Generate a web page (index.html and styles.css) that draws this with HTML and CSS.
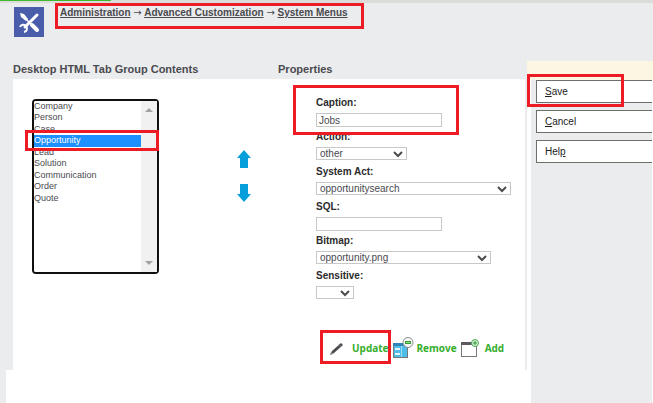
FILE: index.html
```html
<!DOCTYPE html>
<html lang="en">
<head>
  <meta charset="UTF-8">
  <meta name="viewport" content="width=device-width, initial-scale=1.0">
  <title>System Menus</title>
  <link rel="stylesheet" href="styles.css">
</head>
<body>

  <div class="progress"><div class="progress-bar"></div></div>

  <div class="layout">
    <div class="content">

      <!-- Header -->
      <header class="header">
        <svg class="logo" viewBox="0 0 30 30">
          <rect width="30" height="30" fill="#4a5dab"/>
          <path d="M6 6l4 1 4 5-2 2-5-4z" fill="#fff"/>
          <path d="M12 12l5 5" stroke="#fff" stroke-width="1.500"/>
          <path d="M18 18l5 5" stroke="#fff" stroke-width="4" stroke-linecap="round"/>
          <path d="M23 8L11 20" stroke="#fff" stroke-width="3" stroke-linecap="round"/>
          <path d="M6 20a3.500 3.500 0 0 1 6-1a3.500 3.500 0 0 1-2 6" fill="none" stroke="#fff" stroke-width="2"/>
        </svg>
        <nav class="breadcrumb">
          <a href="#">Administration</a> <span class="arrow">→</span> <a href="#">Advanced Customization</a> <span class="arrow">→</span> <a href="#">System Menus</a>
          <span class="mark mark-breadcrumb"></span>
        </nav>
      </header>

      <div class="titles">
        <h2>Desktop HTML Tab Group Contents</h2>
        <h2>Properties</h2>
      </div>

      <div class="panels">
        <!-- Tab list -->
        <section class="tabs">
          <div class="listbox">
            <select id="tabList" size="9" aria-label="Desktop HTML Tab Group Contents">
              <option>Company</option>
              <option>Person</option>
              <option>Case</option>
              <option class="current">Opportunity</option>
              <option>Lead</option>
              <option>Solution</option>
              <option>Communication</option>
              <option>Order</option>
              <option>Quote</option>
            </select>
            <div class="scrollbar">
              <svg width="8" height="4"><path d="M0 4L4 0L8 4z" fill="#a3a3a3"/></svg>
              <svg width="8" height="4"><path d="M0 0L4 4L8 0z" fill="#a3a3a3"/></svg>
            </div>
            <span class="mark mark-option"></span>
          </div>
          <div class="movers">
            <button type="button" aria-label="Move up">
              <svg width="14" height="18"><path d="M7 0L14 8H11V18H3V8H0z" fill="#069fdb"/></svg>
            </button>
            <button type="button" aria-label="Move down">
              <svg width="14" height="18"><path d="M7 18L14 10H11V0H3V10H0z" fill="#069fdb"/></svg>
            </button>
          </div>
        </section>

        <!-- Properties -->
        <form class="properties">
          <div class="field">
            <label for="caption">Caption:</label>
            <input type="text" id="caption" value="Jobs">
            <span class="mark mark-caption"></span>
          </div>
          <div class="field">
            <label for="action">Action:</label>
            <div class="dropdown small">
              <select id="action"><option>other</option></select>
              <svg width="10" height="7"><path d="M1 1L5 5L9 1" fill="none" stroke="#4c4c4c" stroke-width="2"/></svg>
            </div>
          </div>
          <div class="field">
            <label for="systemAct">System Act:</label>
            <div class="dropdown large">
              <select id="systemAct"><option>opportunitysearch</option></select>
              <svg width="10" height="7"><path d="M1 1L5 5L9 1" fill="none" stroke="#4c4c4c" stroke-width="2"/></svg>
            </div>
          </div>
          <div class="field">
            <label for="sql">SQL:</label>
            <input type="text" id="sql">
          </div>
          <div class="field">
            <label for="bitmap">Bitmap:</label>
            <div class="dropdown medium">
              <select id="bitmap"><option>opportunity.png</option></select>
              <svg width="10" height="7"><path d="M1 1L5 5L9 1" fill="none" stroke="#4c4c4c" stroke-width="2"/></svg>
            </div>
          </div>
          <div class="field">
            <label for="sensitive">Sensitive:</label>
            <div class="dropdown tiny">
              <select id="sensitive"><option></option></select>
              <svg width="10" height="7"><path d="M1 1L5 5L9 1" fill="none" stroke="#4c4c4c" stroke-width="2"/></svg>
            </div>
          </div>

          <div class="actions">
            <button type="button">
              <svg width="22" height="22" viewBox="0 0 22 22">
                <path d="M3 18l2-4 9-8 2 2-9 8z" fill="#4b4b50"/>
                <path d="M3 18l1-3 2 2z" fill="#8b8b90"/>
                <path d="M12 7l2 3" stroke="#77777c"/>
              </svg>
              Update
              <span class="mark mark-update"></span>
            </button>
            <button type="button">
              <svg width="22" height="22" viewBox="0 0 22 22">
                <rect x="1.500" y="6.500" width="14" height="14" fill="#4fbdea" stroke="#777"/>
                <path d="M1 6h15v3H1z" fill="#3185b2"/>
                <path d="M3 11h5v2H3zM3 16h5v2H3z" fill="#e6f5fc"/>
                <path d="M9.500 9v11" stroke="#a5dcf2"/>
                <circle cx="16" cy="5.500" r="5" fill="#f6f6f6" stroke="#8a8a8a"/>
                <rect x="13.500" y="4.500" width="5" height="2" fill="#9bdc83" stroke="#369b35"/>
              </svg>
              Remove
            </button>
            <button type="button">
              <svg width="22" height="22" viewBox="0 0 22 22">
                <rect x="1.500" y="5.500" width="15" height="14" fill="#fff" stroke="#777"/>
                <path d="M1 5h16v3H1z" fill="#5b5b5f"/>
                <circle cx="15" cy="6" r="3.500" fill="#d7f1d4" stroke="#4aaa55"/>
                <path d="M13 6h4M15 4v4" stroke="#2e9640"/>
              </svg>
              Add
            </button>
          </div>
        </form>
      </div>

      <div class="footer"></div>
    </div>

    <!-- Side buttons -->
    <aside class="sidebar">
      <div class="banner"></div>
      <div class="side-buttons">
        <button type="button"><u>S</u>ave</button>
        <button type="button"><u>C</u>ancel</button>
        <button type="button">Hel<u>p</u></button>
        <span class="mark mark-save"></span>
      </div>
    </aside>
  </div>

</body>
</html>
```
FILE: styles.css
```css
* {
  box-sizing: border-box;
}
body {
  margin: 0;
  min-height: 100vh;
  display: flex;
  flex-direction: column;
  font-family: "Liberation Sans", Arial, sans-serif;
  font-size: 10px;
  line-height: 12px;
  color: #4a4a4f;
  background-color: #ebecee;
}
button, input, select {
  font: inherit;
  color: inherit;
  margin: 0;
}
svg {
  display: block;
}
.progress {
  height: 3px;
  background-color: #dcdcda;
}
.progress-bar {
  width: 17%;
  height: 1px;
  background-color: #3dbb2c;
}
.layout {
  flex: 1;
  display: grid;
  grid-template-columns: minmax(0, 1fr) 126px;
}
.content {
  display: flex;
  flex-direction: column;
}

/* header */
.header {
  display: flex;
  align-items: flex-start;
  gap: 16px;
  height: 58px;
  padding: 4px 0 0 14px;
}
.logo {
  width: 30px;
  height: 30px;
}
.breadcrumb {
  position: relative;
  font-weight: bold;
}
.breadcrumb a {
  color: inherit;
}
.arrow {
  font-family: "DejaVu Sans", sans-serif;
  font-weight: normal;
}
.titles, .panels {
  display: grid;
  grid-template-columns: 264fr 248fr;
  margin-left: 13px;
}
.titles {
  height: 18px;
}
.titles h2 {
  margin: 0;
  padding-top: 1px;
  font-size: 11px;
  line-height: 14px;
}

/* panels */
.panels {
  height: 291px;
  background-color: #fff;
  border-right: 2px solid #ebebeb;
}
.tabs {
  display: flex;
  align-items: flex-start;
  gap: 78px;
  padding: 20px 0 0 19px;
}
.listbox {
  position: relative;
  display: flex;
  width: 127px;
  height: 175px;
  border: 2px solid #101010;
  border-radius: 4px;
}
.listbox select {
  flex: 1;
  min-width: 0;
  height: 100%;
  padding: 0;
  border: none;
  outline: none;
  overflow: hidden;
  font-size: 9px;
  background-color: #fff;
}
.listbox option {
  height: 11px;
  min-height: 11px;
  padding: 0;
  line-height: 11px;
}
.listbox option:nth-child(even) {
  height: 12px;
}
.listbox .current {
  color: #fff;
  background-color: #1e90ff;
}
.scrollbar {
  width: 16px;
  padding: 7px 4px;
  display: flex;
  flex-direction: column;
  justify-content: space-between;
  background-color: #f1f1f1;
}
.movers {
  display: grid;
  gap: 16px;
  padding-top: 51px;
}
.movers button {
  padding: 0;
  border: none;
  background: none;
}
.properties {
  padding: 18px 0 0 39px;
}
.field {
  position: relative;
  margin-bottom: 6px;
}
.field label {
  display: block;
  margin-bottom: 4px;
  font-weight: bold;
  color: #2b2b2b;
}
.field input {
  display: block;
  width: 126px;
  height: 14px;
  padding: 0 2px;
  border: 1px solid #c8c8c8;
  margin-bottom: -2px;
}
.dropdown {
  position: relative;
  height: 13px;
}
.dropdown select {
  display: block;
  width: 100%;
  height: 100%;
  padding: 0 3px;
  border: 1px solid #c8c8c8;
  border-radius: 0;
  line-height: 11px;
  background-color: #fff;
  appearance: none;
}
.dropdown svg {
  position: absolute;
  top: 4px;
  right: 4px;
  pointer-events: none;
}
.tiny { width: 38px; }
.small { width: 91px; }
.medium { width: 175px; }
.large { width: 195px; }
.actions {
  display: flex;
  gap: 3px;
  margin: 38px 0 0 11px;
}
.actions button {
  position: relative;
  display: flex;
  align-items: center;
  gap: 3px;
  padding: 0;
  border: none;
  background: none;
  font-family: "Open Sans", "Noto Sans", sans-serif;
  font-weight: bold;
  color: #35ae2d;
}
.footer {
  flex: 1;
  margin-left: 6px;
  background-color: #fff;
}

/* sidebar */
.sidebar {
  display: flex;
  flex-direction: column;
  padding-top: 58px;
}
.banner {
  height: 19px;
  background-color: #fdf6e2;
}
.side-buttons {
  position: relative;
  flex: 1;
  display: flex;
  flex-direction: column;
  gap: 7px;
  padding-left: 5px;
  border-left: 4px solid #fff;
  border-right: 1px solid #fff;
}
.side-buttons button {
  height: 23px;
  padding: 0 8px;
  border: 1px solid #6e6e6a;
  border-right: none;
  text-align: left;
  color: #222;
  background-color: #fff;
}

/* red highlight boxes */
.mark {
  position: absolute;
  border: 3px solid #ed1c24;
  pointer-events: none;
}
.mark-breadcrumb {
  top: -4px;
  left: -5px;
  width: 309px;
  height: 26px;
}
.mark-option {
  top: 29px;
  left: -9px;
  width: 134px;
  height: 21px;
}
.mark-caption {
  top: -12px;
  left: -23px;
  width: 166px;
  height: 50px;
  z-index: 1;
}
.mark-update {
  top: -7px;
  left: -7px;
  width: 71px;
  height: 34px;
}
.mark-save {
  top: -6px;
  left: -4px;
  width: 97px;
  height: 33px;
}
```
